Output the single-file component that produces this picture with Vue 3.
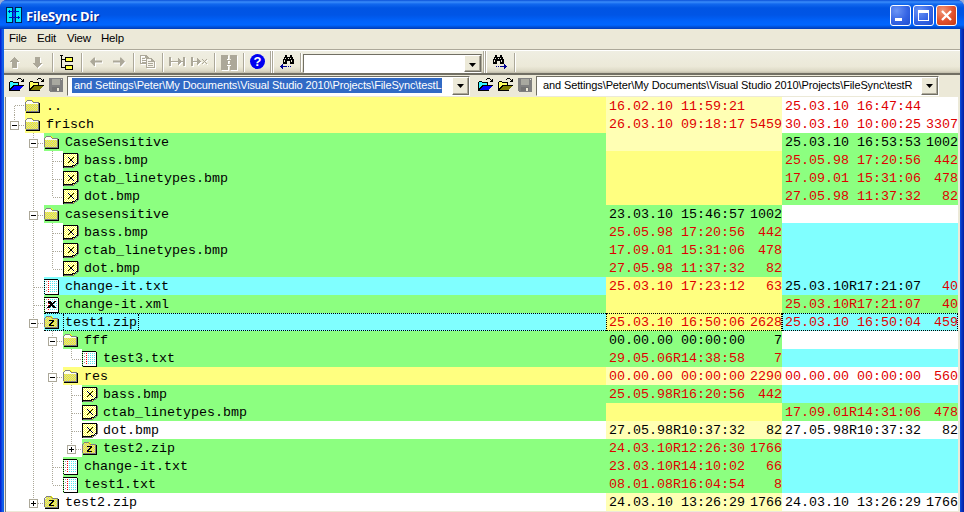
<script setup>
const path = 'and Settings\\Peter\\My Documents\\Visual Studio 2010\\Projects\\FileSync\\test'

// guides: one letter per indent level (s start, v through, t branch, l last, - blank)
const row = (guides, box, icon, name, bg, left, right, selected = false) => ({
  guides: guides.split(''), box, icon, name, bg, cells: [left, right], selected
})
const cell = (bg, date = '', size = '', color = 'red', sizeColor = color) => ({ bg, date, size, color, sizeColor })

const rows = [
  row('s', '', 'folder', '..', 'yellow', cell('pale', '16.02.10 11:59:21'), cell('white', '25.03.10 16:47:44')),
  row('l', 'minus', 'folder', 'frisch', 'yellow', cell('pale', '26.03.10 09:18:17', '5459'), cell('white', '30.03.10 10:00:25', '3307')),
  row('-t', 'minus', 'folder', 'CaseSensitive', 'green', cell('pale'), cell('green', '25.03.10 16:53:53', '1002', 'black')),
  row('-vt', '', 'bmp', 'bass.bmp', 'green', cell('yellow'), cell('green', '25.05.98 17:20:56', '442')),
  row('-vt', '', 'bmp', 'ctab_linetypes.bmp', 'green', cell('yellow'), cell('green', '17.09.01 15:31:06', '478')),
  row('-vl', '', 'bmp', 'dot.bmp', 'green', cell('yellow'), cell('green', '27.05.98 11:37:32', '82')),
  row('-t', 'minus', 'folder', 'casesensitive', 'green', cell('green', '23.03.10 15:46:57', '1002', 'black'), cell('white')),
  row('-vt', '', 'bmp', 'bass.bmp', 'green', cell('green', '25.05.98 17:20:56', '442'), cell('cyan')),
  row('-vt', '', 'bmp', 'ctab_linetypes.bmp', 'green', cell('green', '17.09.01 15:31:06', '478'), cell('cyan')),
  row('-vl', '', 'bmp', 'dot.bmp', 'green', cell('green', '27.05.98 11:37:32', '82'), cell('cyan')),
  row('-t', '', 'txt', 'change-it.txt', 'cyan', cell('yellow', '25.03.10 17:23:12', '63'), cell('cyan', '25.03.10R17:21:07', '40', 'black', 'red')),
  row('-t', '', 'xml', 'change-it.xml', 'green', cell('yellow'), cell('green', '25.03.10R17:21:07', '40')),
  row('-t', 'minus', 'zip', 'test1.zip', 'cyan', cell('yellow', '25.03.10 16:50:06', '2628'), cell('cyan', '25.03.10 16:50:04', '459'), true),
  row('-vt', 'minus', 'folder', 'fff', 'green', cell('green', '00.00.00 00:00:00', '7', 'black'), cell('white')),
  row('-vvl', '', 'txt', 'test3.txt', 'green', cell('green', '29.05.06R14:38:58', '7'), cell('cyan')),
  row('-vt', 'minus', 'folder', 'res', 'yellow', cell('pale', '00.00.00 00:00:00', '2290'), cell('white', '00.00.00 00:00:00', '560')),
  row('-vvt', '', 'bmp', 'bass.bmp', 'green', cell('green', '25.05.98R16:20:56', '442'), cell('cyan')),
  row('-vvt', '', 'bmp', 'ctab_linetypes.bmp', 'green', cell('yellow'), cell('green', '17.09.01R14:31:06', '478')),
  row('-vvt', '', 'bmp', 'dot.bmp', 'white', cell('pale', '27.05.98R10:37:32', '82', 'black'), cell('white', '27.05.98R10:37:32', '82', 'black')),
  row('-vvl', 'plus', 'zip', 'test2.zip', 'green', cell('green', '24.03.10R12:26:30', '1766'), cell('cyan')),
  row('-vt', '', 'txt', 'change-it.txt', 'green', cell('green', '23.03.10R14:10:02', '66'), cell('cyan')),
  row('-vl', '', 'txt', 'test1.txt', 'green', cell('green', '08.01.08R16:04:54', '8'), cell('cyan')),
  row('-l', 'plus', 'zip', 'test2.zip', 'white', cell('pale', '24.03.10 13:26:29', '1766', 'black'), cell('white', '24.03.10 13:26:29', '1766', 'black'))
]

// vertical extent of the dotted line in each guide type
const span = { s: [9, 18], v: [0, 18], t: [0, 18], l: [0, 10] }
</script>

<template>
  <div class="window">
    <svg class="defs" width="0" height="0">
      <defs>
        <pattern id="dither-gray" width="2" height="2" patternUnits="userSpaceOnUse">
          <rect width="2" height="2" fill="#ffff00" /><path d="M1 0h1v1h-1zM0 1h1v1h-1z" fill="#c8c8c8" />
        </pattern>
        <pattern id="dither-white" width="2" height="2" patternUnits="userSpaceOnUse">
          <rect width="2" height="2" fill="#ffff40" /><path d="M0 0h1v1h-1zM1 1h1v1h-1z" fill="#ffffff" />
        </pattern>
        <symbol id="i-folder" viewBox="0 0 16 16">
          <path d="M1 4h1v-2h1v-1h5v1h1v2h5v8h-13z" fill="url(#dither-gray)" />
          <path d="M0 3h1v9h-1zM1 2h1v1h-1zM2 1h5v1h-5zM7 2h1v1h-1zM8 3h6v1h-6z" fill="#808080" />
          <path d="M2 2h5v1h-5zM1 3h7v1h6v1h-13z" fill="#fffff0" />
          <path d="M13 4h1v9h-1zM1 12h13v1h-13z" fill="#808080" />
          <path d="M14 4h1v10h-14v-1h13z" fill="#000" />
        </symbol>
        <symbol id="i-zip" viewBox="0 0 16 16">
          <path d="M1 4h1v-2h1v-1h5v1h1v2h5v8h-13z" fill="url(#dither-gray)" />
          <path d="M0 3h1v9h-1zM1 2h1v1h-1zM2 1h5v1h-5zM7 2h1v1h-1zM8 3h6v1h-6z" fill="#808080" />
          <path d="M13 4h1v9h-1zM1 12h13v1h-13z" fill="#808080" />
          <path d="M14 4h1v10h-14v-1h13z" fill="#000" />
          <path d="M5 5h5v2h-1v1h-1v1h-1v1h3v1h-5v-2h1v-1h1v-1h1v-1h-3z" fill="#000" />
        </symbol>
        <symbol id="i-bmp" viewBox="0 0 16 16">
          <path d="M1 1h13v9l-4 4h-9z" fill="url(#dither-white)" />
          <path d="M0 0h15v1h-15zM0 0h1v15h-1zM14 0h1v11h-1zM0 13h10v1h-10zM10 12h1v1h-1zM9 12h3v1h-3zM12 11h1v1h-1zM13 10h1v1h-1z" fill="#000" />
          <path d="M15 1h1v10h-1zM1 14h10v1h-10zM11 13h1v1h-1zM12 12h2v1h-2zM14 11h1v1h-1z" fill="#707070" />
          <path d="M5 4h1v1h-1zM6 5h1v1h-1zM7 6h1v1h-1zM8 7h1v1h-1zM9 8h1v1h-1zM10 9h1v1h-1zM10 4h1v1h-1zM9 5h1v1h-1zM8 6h1v1h-1zM7 7h1v1h-1zM6 8h1v1h-1zM5 9h1v1h-1z" fill="#000" />
        </symbol>
        <symbol id="i-txt" viewBox="0 0 16 16">
          <rect x="1" y="1" width="13" height="14" fill="#fff" />
          <path d="M6 2.5h7M6 4.5h7M6 6.5h7M6 8.5h7M6 10.5h7M6 12.5h7" stroke="#50e8f0" stroke-dasharray="1 1" />
          <path d="M4.500 2v12" stroke="#f00" stroke-dasharray="1 1" />
          <path d="M2.500 2v12" stroke="#a0a0a0" stroke-dasharray="1 2" />
          <path d="M.5 0v16" stroke="#000" stroke-dasharray="1 1" />
          <path d="M14 1h1v15h-14v-1h13z" fill="#000" />
          <path d="M1 0h13v1h-13z" fill="#000" />
        </symbol>
        <symbol id="i-xml" viewBox="0 0 16 16">
          <use href="#i-txt" width="16" height="16" />
          <path d="M4 4h3v1h1v1h1v-1h1v-1h2v1h-1v1h-1v1h-1v1h1v1h1v1h1v1h-3v-1h-1v-1h-1v1h-1v1h-3v-1h1v-1h1v-1h1v-1h-1v-1h-1v-1h-1z" fill="#000" />
        </symbol>
        <symbol id="i-open-arrow" viewBox="0 0 16 14">
          <path d="M9 0h3v1h-3zM8 1h1v1h-1zM12 1h1v1h-1zM14 1h1v3h-3v-1h1v-1h1z" fill="#000" />
          <path d="M0 4h1v-1h3v1h6v3h5v1h-1v1h-1v1h-1v1h-1v2h-11z" fill="#000" />
        </symbol>
        <symbol id="i-save" viewBox="0 0 15 15">
          <path d="M0 0h14v14h-13l-1-1z" fill="#808080" />
          <path d="M3 1h8v6h-8z" fill="#a8a8a0" />
          <path d="M3 9h8v4h-8z" fill="#747474" />
          <path d="M8 10h2v3h-2zM12 1h1v1h-1z" fill="#ece9d8" />
        </symbol>
        <symbol id="i-binoculars" viewBox="0 0 13 10">
          <path d="M3 0h2v2h3v-2h2v2h1v2h1v5h-4v-3h-3v3h-4v-5h1v-2h1z" fill="#000" />
          <path d="M3 3h1v1h-1zM2 5h1v2h-1zM8 3h1v1h-1zM9 5h1v2h-1zM6 3h1v1h-1z" fill="#ece9d8" />
        </symbol>
      </defs>
    </svg>

    <header class="title">
      <svg class="logo" width="16" height="16" viewBox="0 0 16 16" shape-rendering="crispEdges">
        <path d="M0 0h7v16h-7zM9 0h7v16h-7z" fill="#002050" />
        <path d="M1 1h5v14h-5zM10 1h5v14h-5z" fill="#00e8ff" />
        <path d="M3 3h1v1h9v1h-9v1h-1v-1h-1v-1h1zM12 9h1v1h1v1h-1v1h-1v-1h-9v-1h9zM6 6h1v3h-1zM9 6h1v3h-1z" fill="#0010c0" />
      </svg>
      <h1>FileSync Dir</h1>
      <div class="controls">
        <span class="control"><svg width="19" height="19" shape-rendering="crispEdges"><path d="M4 12h7v3h-7z" fill="#fff" /></svg></span>
        <span class="control"><svg width="19" height="19" shape-rendering="crispEdges"><path d="M4 4h11v11h-11zM5 7v7h9v-7z" fill="#fff" fill-rule="evenodd" /></svg></span>
        <span class="control close"><svg width="19" height="19"><path d="M5 5l9 9M14 5l-9 9" stroke="#fff" stroke-width="2.3" /></svg></span>
      </div>
    </header>

    <div class="frame">
      <main class="client">
        <nav class="menu"><span>File</span><span>Edit</span><span>View</span><span>Help</span></nav>

        <div class="toolbar">
          <span class="tool first"><svg class="faded" width="11" height="11" viewBox="0 0 11 11" shape-rendering="crispEdges"><path d="M4 0h1v1h1v1h1v1h1v1h1v1h-2v6h-5v-6h-2v-1h1v-1h1v-1h1v-1h1z" /></svg></span>
          <span class="tool"><svg class="faded" width="9" height="11" viewBox="0 0 9 11" shape-rendering="crispEdges"><path d="M2 0h5v6h2v1h-1v1h-1v1h-1v1h-1v1h-1v-1h-1v-1h-1v-1h-1v-1h-1v-1h2z" /></svg></span>
          <i class="sep"></i>
          <span class="tool">
            <svg width="14" height="15" viewBox="0 0 14 15" shape-rendering="crispEdges">
              <path d="M1 0h1v12h4v1h-5zM2 4h4v1h-4zM0 0h3v1h-3z" /><path d="M5 2h8v5h-8zM5 10h8v5h-8z" />
              <path d="M6 3h6v3h-6zM6 11h6v3h-6z" fill="#ffff40" />
            </svg>
          </span>
          <i class="sep"></i>
          <span class="tool"><svg class="faded" width="12" height="10" viewBox="0 0 12 10"><path d="M0 4.500l4-4h1v3h7v2h-7v3.500h-1z" /></svg></span>
          <span class="tool"><svg class="faded" width="12" height="10" viewBox="0 0 12 10"><path d="M12 4.500l-4-4h-1v3h-7v2h7v3.500h1z" /></svg></span>
          <i class="sep"></i>
          <span class="tool">
            <svg class="faded" width="16" height="14" viewBox="0 0 16 14" shape-rendering="crispEdges">
              <path d="M0 0h7v1h1v1h1v1h-1v6h-8zM1 1v7h6v-5h-2v-2z" fill-rule="evenodd" />
              <path d="M2 3h3v1h-3zM2 5h4v1h-4zM2 7h4v1h-4z" />
              <path d="M6 3h6v1h1v1h1v1h1v7h-9z" /><path d="M7 4h4v3h3v5h-7z" fill="#f6f4ec" />
              <path d="M8 6h3v1h-3zM8 8h5v1h-5zM8 10h5v1h-5z" />
            </svg>
          </span>
          <i class="sep"></i>
          <span class="tool"><svg class="faded" width="16" height="10" viewBox="0 0 16 10" shape-rendering="crispEdges"><path d="M0 0h2v9h-2zM14 0h2v9h-2zM2 4h7v-3h1v1h1v1h1v1h2v1h-2v1h-1v1h-1v1h-1v-3h-7z" /></svg></span>
          <span class="tool"><svg class="faded" width="17" height="10" viewBox="0 0 17 10" shape-rendering="crispEdges"><path d="M0 0h2v9h-2zM2 4h4v-3h1v1h1v1h1v1h1v1h-1v1h-1v1h-1v1h-1v-3h-4zM11 2h1v1h1v1h1v-1h1v-1h1v1h-1v1h-1v1h1v1h1v1h-1v-1h-1v-1h-1v1h-1v1h-1v-1h1v-1h1v-1h-1v-1h-1z" /></svg></span>
          <i class="sep"></i>
          <span class="tool"><svg class="faded" width="16" height="15" viewBox="0 0 16 15" shape-rendering="crispEdges"><path d="M0 0h7v4h-1v1h1v5h-1v1h1v4h-7zM9 0h7v15h-7v-4h1v-1h-1v-5h1v-1h-1zM7 5h2v1h-2zM7 9h2v1h-2z" /></svg></span>
          <i class="sep"></i>
          <span class="tool help"><b>?</b></span>
          <i class="sep double"></i>
          <span class="tool narrow">
            <svg width="15" height="15" viewBox="0 0 15 15" shape-rendering="crispEdges"><use href="#i-binoculars" x="3" width="13" height="10" /><path d="M3 9h1v2h4v1h-4v2h-1v-1h-1v-1h-1v-1h1v-1h1zM9 11h1v1h-1zM11 11h1v1h-1z" fill="#000090" /></svg>
          </span>
          <i class="sep"></i>
          <div class="combo find"><span class="field"></span><span class="drop"><svg width="7" height="4"><path d="M0 0h7L3.500 4z" /></svg></span></div>
          <i class="sep double"></i>
          <span class="tool">
            <svg width="15" height="15" viewBox="0 0 15 15" shape-rendering="crispEdges"><use href="#i-binoculars" width="13" height="10" /><path d="M12 9h1v1h1v1h1v1h-1v1h-1v1h-1v-2h-4v-1h4zM6 11h1v1h-1zM4 11h1v1h-1z" fill="#000090" /></svg>
          </span>
          <i class="sep"></i>
        </div>

        <div class="paths">
          <section v-for="side in ['L', 'R']" :key="side" class="pathbar" :class="'side-' + side">
            <svg v-for="kind in ['blue', 'olive']" :key="kind" class="open" :class="kind" width="16" height="14" viewBox="0 0 16 14" shape-rendering="crispEdges">
              <use href="#i-open-arrow" width="16" height="14" />
              <path class="back" d="M1 4h3v1h5v2h-5v1h-1v1h-1v1h-1z" />
              <path class="flap" d="M5 8h9v1h-1v1h-1v1h-1v1h-9v-1h1v-1h1v-1h1z" />
            </svg>
            <svg class="save" width="15" height="15" shape-rendering="crispEdges"><use href="#i-save" width="15" height="15" /></svg>
            <div class="combo"><span class="field"><span class="path" :class="{ picked: side === 'L' }">{{ path + side }}</span></span><span class="drop"><svg width="7" height="4"><path d="M0 0h7L3.500 4z" /></svg></span></div>
          </section>
        </div>

        <div class="tree">
          <div v-for="(r, i) in rows" :key="i" class="row" :class="{ selected: r.selected }">
            <div class="branch">
              <svg v-for="(g, n) in r.guides" :key="n" width="19" height="18" shape-rendering="crispEdges">
                <g v-if="g !== '-'" stroke="#aca899" fill="none">
                  <path :d="`M8.5 ${span[g][0]}V${span[g][1]}`" stroke-dasharray="1 1" />
                  <path v-if="g !== 'v'" :d="`M9 ${g === 's' ? 8.5 : 10.5}H19`" stroke-dasharray="1 1" />
                </g>
                <g v-if="r.box && n === r.guides.length - 1">
                  <rect x="4.500" y="6.500" width="8" height="8" fill="#fff" stroke="#aca899" />
                  <path d="M6 10h5v1h-5z" /><path v-if="r.box === 'plus'" d="M8 8h1v5h-1z" />
                </g>
              </svg>
            </div>
            <div class="name" :class="r.bg">
              <svg class="icon" width="16" height="16" shape-rendering="crispEdges"><use :href="'#i-' + r.icon" width="16" height="16" /></svg>
              <span class="label">{{ r.name }}</span>
            </div>
            <div v-for="(c, n) in r.cells" :key="n" class="cell" :class="c.bg">
              <span :class="'ink-' + c.color">{{ c.date }}</span>
              <span class="size" :class="'ink-' + c.sizeColor">{{ c.size }}</span>
            </div>
          </div>
        </div>
      </main>
    </div>
  </div>
</template>

<style>
body { background: #9aaed8; overflow: hidden; }
</style>

<style scoped>
* { box-sizing: border-box; }
.window { width: 964px; height: 512px; overflow: hidden; border-radius: 7px 7px 0 0; background: #0831d9; font: 11px "Liberation Sans", Arial, sans-serif; color: #000; }
.defs { display: block; height: 0; }
svg { display: block; flex: none; }
.title { height: 29px; display: flex; align-items: flex-start; padding: 0 7px 0 6px; background: linear-gradient(#0a50d8 0, #3a8cfa 2px, #1268ee 4px, #0054e3 8px, #0055e6 15px, #0062fa 21px, #0066ff 25px, #0050d8 27px, #003cb8 29px); }
.logo { margin-top: 7px; }
h1 { flex: 1; margin: 6px 0 0 4px; font: bold 13px/20px "Open Sans", sans-serif; letter-spacing: -0.2px; color: #fff; text-shadow: 1px 1px 1px #0a1883; }
.controls { display: flex; gap: 2px; margin-top: 5px; }
.control { width: 21px; height: 21px; border: 1px solid #fff; border-radius: 3px; background: radial-gradient(circle at 30% 25%, #6c95f5, #3564e4 55%, #1e4ed0); }
.control.close { background: radial-gradient(circle at 30% 25%, #f09878, #e2502c 55%, #c43a12); }
.frame { height: 483px; padding: 0 4px; background: linear-gradient(90deg, #0019cf 0, #0831d9 1px, #166aee 3px, #0855dd 4px, #0855dd 960px, #0a3ccc 961px, #001ea0 964px); }
.client { height: 483px; background: #ece9d8; }
.menu { height: 22px; display: flex; align-items: center; padding: 0 0 3px 5px; border-bottom: 1px solid #fff; box-shadow: inset 0 -1px #aca899; font-size: 11.5px; letter-spacing: -0.2px; }
.menu span:nth-child(1) { width: 28px; }
.menu span:nth-child(2) { width: 30px; }
.menu span:nth-child(3) { width: 34px; }
.toolbar { height: 24px; display: flex; align-items: stretch; background: linear-gradient(#efeee2, #ece9d8 70%, #ddd9c6 90%, #c0bcab); border-bottom: 2px solid #716f64; }
.tool { width: 23px; height: 22px; display: flex; align-items: center; justify-content: center; }
.tool.first, .tool.narrow { width: 22px; }
.faded { fill: #aca899; filter: drop-shadow(1px 1px 0 #fff); }
.sep { width: 6px; margin: 2px 0 1px; flex: none; background: linear-gradient(90deg, transparent 3px, #aca899 3px, #aca899 4px, #fff 4px, #fff 5px, transparent 5px); }
.sep.double { margin: 0; background: linear-gradient(90deg, transparent 1px, #aca899 1px, #aca899 2px, #fff 2px, #fff 3px, #aca899 3px, #aca899 4px, #fff 4px, #fff 5px, transparent 5px); }
.help b { width: 15px; height: 15px; margin-top: -1px; border-radius: 50%; background: #0000f0; color: #fff; font: bold 13px/15px "Liberation Sans", sans-serif; text-align: center; }
.combo { display: flex; height: 20px; border: 1px solid; border-color: #716f64 #fff #fff #716f64; background: #fff; }
.field { flex: 1; min-width: 0; display: flex; align-items: center; }
.drop { width: 17px; display: flex; align-items: center; justify-content: center; background: #ece9d8; border: 1px solid; border-color: #fff #716f64 #716f64 #fff; box-shadow: inset -1px -1px #aca899; }
.find { width: 179px; margin-top: 3px; height: 19px; border-right-color: #aca899; }
.find .drop { padding-top: 2px; }
.paths { height: 22px; display: flex; padding-left: 5px; }
.pathbar { display: flex; align-items: flex-start; }
.side-L { width: 469px; }
.side-R { width: 462px; }
.open { margin: 3px 4px 0 0; }
.save { margin: 3px 3px 0 0; }
.pathbar .combo { width: 403px; margin-top: 1px; }
.blue .back { fill: #30f4ff; }
.blue .flap { fill: #0000ff; }
.olive .back { fill: #ffff60; }
.olive .flap { fill: #808000; }
.path { margin: -1px 0 0 4px; padding: 0 0 0 2px; height: 15px; line-height: 15px; white-space: nowrap; font-size: 11px; letter-spacing: -0.12px; }
.path.picked { background: #316ac5; color: #fff; }
.tree { height: 415px; margin-right: 2px; border-left: 1px solid #ece9d8; box-shadow: inset 1px 0 #808080; padding-left: 1px; font: 13.333px/20px "Liberation Mono", "Courier New", monospace; }
.row { height: 18px; display: flex; }
.branch { display: flex; background: #fff; }
.name { flex: 1; display: flex; }
.icon { margin: 2px 3px 0 0; }
.label { height: 18px; padding: 0 2px; white-space: pre; }
.cell { width: 176px; height: 18px; padding: 0 0 0 3px; display: flex; justify-content: space-between; white-space: pre; }
.yellow { background: #ffff80; }
.pale { background: #ffffb4; }
.green { background: #8cff80; }
.cyan { background: #80ffff; }
.white { background: #fff; }
.ink-red { color: #e00000; }
.selected .name { border: 1px dotted #000; border-width: 1px 0; }
.selected .cell { border: 1px dotted #000; padding-left: 2px; }
.selected .size { margin-right: -1px; }
.selected .label, .selected .cell span { height: 16px; line-height: 18px; }
.selected .icon { margin-top: 1px; }
.selected .label { border: 1px dotted #000; border-width: 0 1px; padding: 0 1px; }
</style>
